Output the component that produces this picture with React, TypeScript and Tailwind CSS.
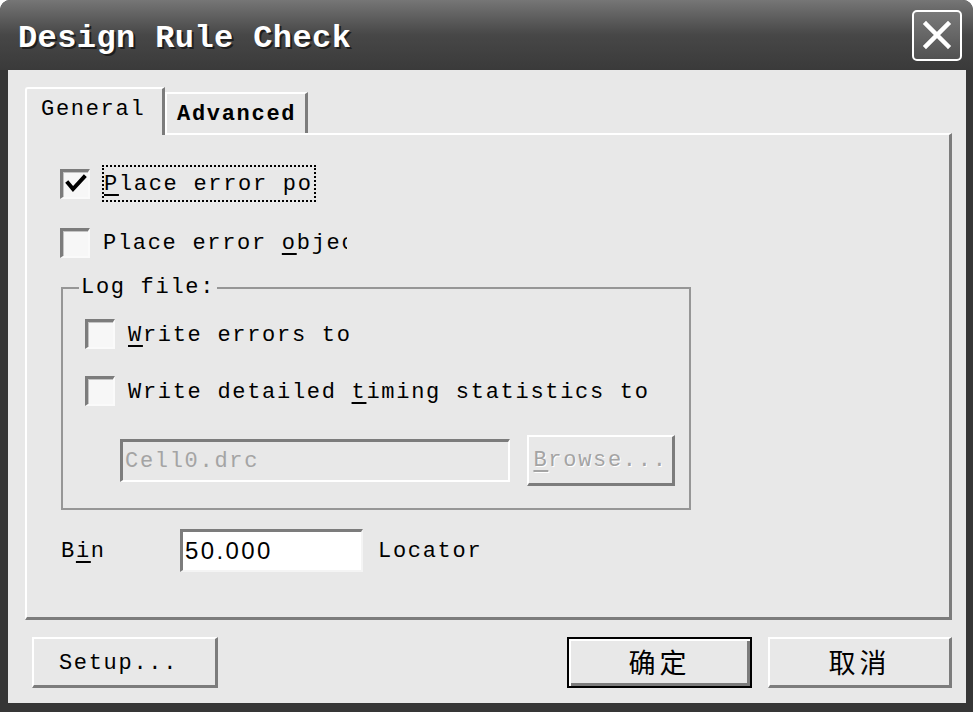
import React from "react";

// Classic Win32 "Design Rule Check" dialog, grayscale

function CheckBox({ checked }: { checked?: boolean }) {
  return (
    <span className="flex h-[30px] w-[30px] shrink-0 items-center justify-center border-t-[3px] border-l-[3px] border-r-2 border-b-2 border-t-[#7c7c7c] border-l-[#7c7c7c] border-r-[#fafafa] border-b-[#fafafa] bg-[#f7f7f7] shadow-[inset_1px_1px_0_#c4c4c4]">
      {checked && (
        <svg width="22" height="22" viewBox="0 0 22 22">
          <polyline points="3,10 8,16 19,4" fill="none" stroke="#000" strokeWidth="4" strokeLinecap="square" />
        </svg>
      )}
    </span>
  );
}

function Button({
  children,
  className = "",
  isDefault = false,
}: {
  children: React.ReactNode;
  className?: string;
  isDefault?: boolean;
}) {
  return (
    <div
      className={
        "flex h-[51px] items-center justify-center bg-[#e8e8e8] " +
        (isDefault
          ? "border-2 border-black shadow-[inset_2px_2px_0_#fff,inset_-3px_-3px_0_#7c7c7c] "
          : "border-t-2 border-l-2 border-r-[3px] border-b-[3px] border-t-white border-l-white border-r-[#7c7c7c] border-b-[#7c7c7c] ") +
        className
      }
    >
      {children}
    </div>
  );
}

export default function App() {
  return (
    <div className="h-[712px] w-[973px] bg-white font-['Liberation_Mono',monospace] text-[22px] tracking-[1.7px] text-black">
      <div className="flex h-full w-full flex-col overflow-hidden rounded-t-[10px] bg-[#363636]">
        {/* Title bar */}
        <div className="flex h-[70px] shrink-0 items-center justify-between bg-gradient-to-b from-[#767676] via-[#474747] to-[#3a3a3a] pl-[18px] pr-[11px]">
          <span className="pt-[8px] text-[32px] font-bold tracking-[0.4px] text-white [text-shadow:2px_2px_0_#1e1e1e]">
            Design Rule Check
          </span>
          <div className="flex h-[51px] w-[50px] items-center justify-center rounded-[5px] border-2 border-white bg-gradient-to-b from-[#7a7a7a] to-[#525252]">
            <svg width="30" height="30" viewBox="0 0 30 30">
              <path d="M4 4 L26 26 M26 4 L4 26" stroke="#fff" strokeWidth="4.5" strokeLinecap="square" />
            </svg>
          </div>
        </div>

        {/* Body */}
        <div className="ml-[8px] mr-[7px] mb-[9px] flex flex-1 flex-col bg-[#e8e8e8] pl-[17px] pr-[14px] pt-[17px]">
          {/* Tabs */}
          <div className="flex h-[46px] items-end">
            <div className="relative z-10 -mb-[2px] h-[48px] w-[140px] rounded-tl-[3px] border-t-2 border-l-2 border-r-[3px] border-t-white border-l-white border-r-[#7c7c7c] bg-[#e8e8e8] pl-[14px] pt-[8px] leading-[26px]">
              General
            </div>
            <div className="h-[41px] w-[143px] border-t-2 border-l-2 border-r-[3px] border-t-white border-l-white border-r-[#7c7c7c] pl-[10px] pt-[8px] font-bold leading-[26px]">
              Advanced
            </div>
          </div>

          {/* Tab panel */}
          <div className="flex h-[487px] w-[927px] flex-col border-t-2 border-l-2 border-r-[3px] border-b-[3px] border-t-white border-l-white border-r-[#7c7c7c] border-b-[#7c7c7c] pl-[33px] pt-[30px]">
            <div className="flex h-[37px] items-center gap-[12px]">
              <CheckBox checked />
              <span className="block h-[37px] w-[214px] overflow-hidden whitespace-nowrap border-2 border-dotted border-black pt-[1px] leading-[33px]">
                <u className="underline-offset-[4px]">P</u>lace error points
              </span>
            </div>
            <div className="mt-[22px] flex h-[37px] items-center gap-[13px]">
              <CheckBox />
              <span className="block w-[244px] overflow-hidden whitespace-nowrap pt-[2px] leading-[37px]">
                Place error <u className="underline-offset-[4px]">o</u>bjects
              </span>
            </div>

            {/* Log file group */}
            <fieldset className="ml-[1px] mt-[14px] w-[630px] border-2 border-[#969696] pl-[22px] pr-[14px] pb-[22px] pt-[18px]">
              <legend className="-ml-[6px] px-[2px] leading-[26px]">Log file:</legend>
              <div className="flex h-[30px] items-center gap-[13px]">
                <CheckBox />
                <span className="whitespace-nowrap pt-[2px]">
                  <u className="underline-offset-[4px]">W</u>rite errors to
                </span>
              </div>
              <div className="mt-[27px] flex h-[30px] items-center gap-[13px]">
                <CheckBox />
                <span className="whitespace-nowrap pt-[2px]">
                  Write detailed <u className="underline-offset-[4px]">t</u>iming statistics to
                </span>
              </div>
              <div className="mt-[29px] flex h-[51px] items-center">
                <div className="ml-[35px] flex h-[43px] w-[390px] items-center border-t-[3px] border-l-[3px] border-r-2 border-b-2 border-t-[#7c7c7c] border-l-[#7c7c7c] border-r-white border-b-white pl-[2px] text-[#a4a4a4]">
                  Cell0.drc
                </div>
                <Button className="ml-[17px] w-[148px] text-[#a4a4a4] [text-shadow:1px_1px_0_#fff]">
                  <span>
                    <u className="underline-offset-[4px]">B</u>rowse...
                  </span>
                </Button>
              </div>
            </fieldset>

            {/* Bin row */}
            <div className="mt-[19px] flex h-[43px] items-center">
              <span className="w-[120px] pl-[1px] pt-[2px]">
                B<u className="underline-offset-[4px]">i</u>n
              </span>
              <div className="flex h-[43px] w-[183px] items-center border-t-[3px] border-l-[3px] border-r-2 border-b-2 border-t-[#7c7c7c] border-l-[#7c7c7c] border-r-[#f4f4f4] border-b-[#f4f4f4] bg-white pl-[2px] font-['Liberation_Sans',sans-serif] text-[24px] tracking-[2.4px]">
                50.000
              </div>
              <span className="ml-[15px] pt-[2px]">Locator</span>
            </div>
          </div>

          {/* Bottom buttons */}
          <div className="mt-[17px] flex items-center">
            <Button className="ml-[7px] w-[186px]">
              <span className="pr-[12px] pt-[2px]">Setup...</span>
            </Button>
            <div className="flex-1" />
            <Button isDefault className="w-[185px] font-['Noto_Sans_CJK_SC',sans-serif] text-[27px] tracking-[4px]">
              确定
            </Button>
            <Button className="ml-[16px] w-[184px] font-['Noto_Sans_CJK_SC',sans-serif] text-[27px] tracking-[4px]">
              取消
            </Button>
          </div>
        </div>
      </div>
    </div>
  );
}
